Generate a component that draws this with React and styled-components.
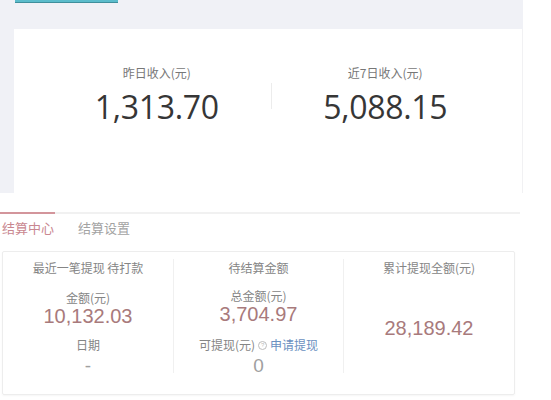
import React from "react";
import styled, { createGlobalStyle } from "styled-components";

const Global = createGlobalStyle`
  html, body { margin: 0; padding: 0; background: #ffffff; }
  body { font-family: "Noto Sans CJK SC", "Noto Sans", sans-serif; }
`;

const Page = styled.div`
  width: 551px;
  height: 400px;
  overflow: hidden;
  background: #ffffff;
`;

const TopArea = styled.div`
  width: 509px;
  padding: 0 0 0 14px;
  background: #f0f1f6;
`;

const TealBar = styled.div`
  width: 103px;
  height: 2px;
  margin-left: 1px;
  margin-bottom: 26px;
  background: #5bbccb;
  border-bottom: 1px solid #3f8f9c;
`;

const Card = styled.div`
  height: 164px;
  background: #ffffff;
  border-right: 1px solid #f1f1f3;
  box-sizing: border-box;
  padding: 35px 23px 0 29px;
  display: grid;
  grid-template-columns: 1fr 1px 1fr;
  align-items: start;
`;

const Stat = styled.div`
  display: flex;
  flex-direction: column;
  align-items: center;
`;

const StatLabel = styled.div`
  font-size: 12px;
  line-height: 17px;
  color: #777777;
`;

const StatValue = styled.div`
  margin-top: 6px;
  font-family: "Open Sans", "Noto Sans", sans-serif;
  font-size: 32px;
  line-height: 40px;
  color: #363636;
  letter-spacing: -0.3px;
`;

const VDivider = styled.div`
  width: 1px;
  height: 26px;
  margin-top: 19px;
  background: #ececec;
`;

const Section = styled.div`
  margin-top: 19px;
`;

const TabTrack = styled.div`
  width: 520px;
  height: 2px;
  background: #f1f1f1;
  display: flex;
`;

const TabIndicator = styled.div`
  width: 55px;
  height: 2px;
  background: #d3959b;
`;

const TabRow = styled.div`
  display: flex;
  gap: 24px;
  padding: 5px 0 0 2px;
`;

const Tab = styled.div`
  font-size: 13px;
  line-height: 18px;
  color: ${(p) => (p.$active ? "#c98790" : "#a3a3a3")};
`;

const Box = styled.div`
  margin: 14px 0 0 2px;
  width: 513px;
  height: 144px;
  box-sizing: border-box;
  border: 1px solid #ededed;
  border-radius: 2px;
  box-shadow: 0 1px 2px rgba(0, 0, 0, 0.04);
  padding: 7px 0 0;
  display: grid;
  grid-template-columns: 170px 170px 1fr;
  align-items: start;
`;

const Column = styled.div`
  display: flex;
  flex-direction: column;
  align-items: center;
  height: 114px;
  border-left: ${(p) => (p.$divided ? "1px solid #f0f0f0" : "none")};
`;

const ColTitle = styled.div`
  font-size: 12px;
  line-height: 18px;
  color: #858585;
`;

const SubLabel = styled.div`
  margin-top: ${(p) => p.$gap}px;
  font-size: 12px;
  line-height: 16px;
  color: #858585;
  display: flex;
  align-items: center;
  gap: 3px;
`;

const Amount = styled.div`
  margin-top: ${(p) => p.$gap || 0}px;
  font-family: "Liberation Sans", Arial, sans-serif;
  font-size: 20px;
  line-height: 20px;
  color: #a87a7c;
`;

const Small = styled.div`
  margin-top: 3px;
  font-family: "Liberation Sans", Arial, sans-serif;
  font-size: 19px;
  line-height: 20px;
  color: #a0a0a0;
`;

const Help = styled.span`
  display: inline-flex;
  align-items: center;
  justify-content: center;
  width: 7px;
  height: 7px;
  border: 1px solid #bdbdbd;
  border-radius: 50%;
  font-size: 6px;
  line-height: 1;
  color: #bdbdbd;
  font-family: "Liberation Sans", Arial, sans-serif;
`;

const Link = styled.span`
  color: #6a90c0;
`;

export default function App() {
  return (
    <Page>
      <Global />
      <TopArea>
        <TealBar />
        <Card>
          <Stat>
            <StatLabel>昨日收入(元)</StatLabel>
            <StatValue>1,313.70</StatValue>
          </Stat>
          <VDivider />
          <Stat>
            <StatLabel>近7日收入(元)</StatLabel>
            <StatValue>5,088.15</StatValue>
          </Stat>
        </Card>
      </TopArea>
      <Section>
        <TabTrack>
          <TabIndicator />
        </TabTrack>
        <TabRow>
          <Tab $active>结算中心</Tab>
          <Tab>结算设置</Tab>
        </TabRow>
        <Box>
          <Column>
            <ColTitle>最近一笔提现 待打款</ColTitle>
            <SubLabel $gap={13}>金额(元)</SubLabel>
            <Amount>10,132.03</Amount>
            <SubLabel $gap={11}>日期</SubLabel>
            <Small>-</Small>
          </Column>
          <Column $divided>
            <ColTitle>待结算金额</ColTitle>
            <SubLabel $gap={11}>总金额(元)</SubLabel>
            <Amount>3,704.97</Amount>
            <SubLabel $gap={13}>
              可提现(元)
              <Help>?</Help>
              <Link>申请提现</Link>
            </SubLabel>
            <Small>0</Small>
          </Column>
          <Column $divided>
            <ColTitle>累计提现全额(元)</ColTitle>
            <Amount $gap={41}>28,189.42</Amount>
          </Column>
        </Box>
      </Section>
    </Page>
  );
}
